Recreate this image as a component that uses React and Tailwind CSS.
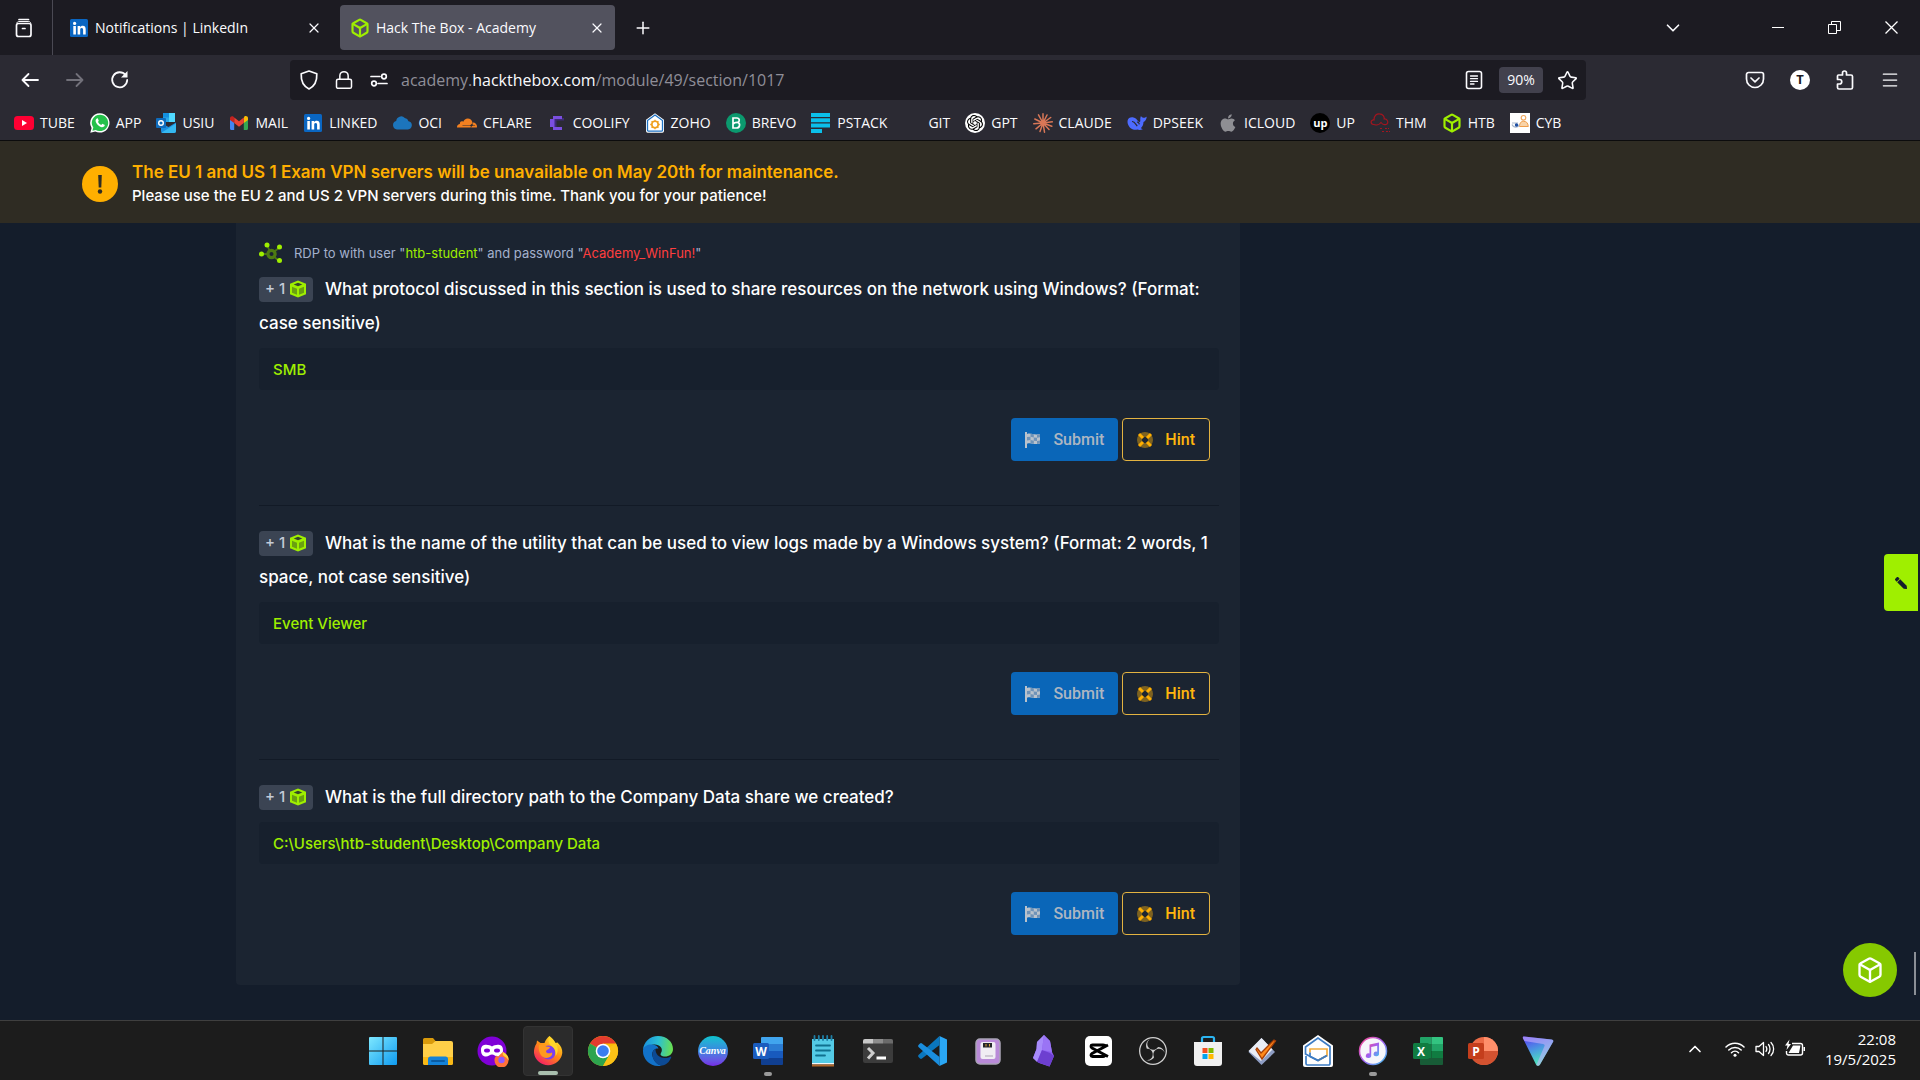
import { Fragment } from 'react';
import { Box, ChevronDown, ChevronUp, Lock, Plus, Star, X, Menu } from 'lucide-react';
import { FaApple, FaPen } from 'react-icons/fa';
import { SiCloudflare, SiObsstudio, SiOpenai } from 'react-icons/si';

/* ======= BOOKMARK ICONS ======= */
const LinkedInIcon = () => (
    <svg viewBox="0 0 20 20" className="w-5 h-5 shrink-0">
        <rect x="1" y="1" width="18" height="18" rx="1.5" fill="#0a66c2" />
        <circle cx="5.6" cy="5.4" r="1.6" fill="#fff" />
        <path d="M4.3 8h2.6v8.4H4.3zM8.6 8h2.5v1.2c.5-.8 1.4-1.4 2.6-1.4 2.4 0 3 1.5 3 3.7v4.9h-2.6v-4.4c0-1.1-.1-2.1-1.4-2.1s-1.5.9-1.5 2v4.5H8.6z" fill="#fff" />
    </svg>
);

const TubeIcon = () => (
    <svg viewBox="0 0 20 20" className="w-5 h-5">
        <rect x="0" y="3" width="20" height="14" rx="3.5" fill="#ff0033" />
        <path d="M8 7v6l5-3z" fill="#fff" />
    </svg>
);

const WhatsAppIcon = () => (
    <svg viewBox="0 0 20 20" className="w-5 h-5">
        <path d="M10 .2a9.7 9.7 0 1 1-4.7 18.3L.3 19.8l1.3-4.9A9.7 9.7 0 0 1 10 .2z" fill="#fff" />
        <path d="M10 1.7a8.2 8.2 0 1 1-4.3 15.2l-3.3.9.9-3.2A8.2 8.2 0 0 1 10 1.7z" fill="#25c14b" />
        <path d="M6.9 5.4c.4-.2.8-.1 1 .3l.8 1.8c.1.3 0 .5-.7 1.4.9 1.6 1.9 2.4 3.4 3 .8-1 .9-1.1 1.2-1l1.9.9c.3.2.2.9 0 1.3-.4.8-1.7 1.2-2.6 1.1-2.7-.4-6-3.4-6.3-6.2 0-1.1.5-2.1 1.3-2.6z" fill="#fff" />
    </svg>
);

const OutlookIcon = () => (
    <svg viewBox="0 0 20 20" className="w-5 h-5">
        <path d="M7 0h12v9H7z" fill="#1490df" />
        <path d="M13 0h6v4.5h-6zM13 9h6V4.5h-6z" fill="#50d9ff" />
        <path d="M7 4.5h6V9H7z" fill="#28a8ea" />
        <path d="M5 10l7.5 4L20 9.5V18a2 2 0 0 1-2 2H7a2 2 0 0 1-2-2z" fill="#1a8fe0" />
        <path d="M5 20l15-9.5V18a2 2 0 0 1-2 2z" fill="#35b8f1" />
        <rect x="0" y="5" width="10" height="10" rx="1" fill="#0f6cbd" />
        <circle cx="5" cy="10" r="2.3" fill="none" stroke="#fff" strokeWidth="1.4" />
    </svg>
);

const GmailIcon = () => (
    <svg viewBox="0 0 20 20" className="w-5 h-5">
        <path d="M1 5v10.5c0 .8.6 1.5 1.4 1.5H5.2V8z" fill="#4285f4" />
        <path d="M19 5v10.5c0 .8-.6 1.5-1.4 1.5h-2.8V8z" fill="#34a853" />
        <path d="M14.8 5v5L19 7V5.2c0-2-2.2-2.8-3.6-1.8z" fill="#fbbc04" />
        <path d="M5.2 10V4.6L10 8.3l4.8-3.7V10L10 13.7z" fill="#ea4335" />
        <path d="M1 5.2V7l4.2 3V4.6l-.7-.9C3 2.6 1 3.5 1 5.2z" fill="#c5221f" />
    </svg>
);

const CloudIcon = () => (
    <svg viewBox="0 0 20 20" className="w-5 h-5">
        <path d="M5 16.5a4.4 4.4 0 0 1-.8-8.6 5 5 0 0 1 8.6-3 4.4 4.4 0 0 1 3.7 3.3 4.2 4.2 0 0 1-.6 8.3z" fill="#1c75bc" />
    </svg>
);

const CoolifyIcon = () => (
    <svg viewBox="0 0 20 20" className="w-5 h-5">
        <path d="M7 5h10v2.5H9.5v8H7z" fill="#3f2a78" />
        <path d="M6 3h9v3H7.500v8H15v3H6v-3H3V6h3z" fill="#7b4fe0" />
    </svg>
);

const ZohoIcon = () => (
    <svg viewBox="0 0 20 20" className="w-5 h-5">
        <path d="M10 .3l9 6.5V18a1.7 1.7 0 0 1-1.7 1.700H2.700A1.700 1.700 0 0 1 1 18V6.800z" fill="#fff" />
        <path d="M10 2l7.500 5.500v9.500a1.200 1.200 0 0 1-1.200 1.200H3.700A1.200 1.200 0 0 1 2.500 17V7.500z" fill="#fff" stroke="#1f72c4" strokeWidth="1.300" />
        <circle cx="10" cy="11.500" r="3.200" fill="none" stroke="#f0a01e" strokeWidth="1.600" />
        <path d="M10 6.700v2M10 14.300v2M5.200 11.500h2M12.800 11.500h2M6.600 8.100L8 9.500M12 13.500l1.400 1.400M13.400 8.100L12 9.500M8 13.500l-1.400 1.400" stroke="#f0a01e" strokeWidth="1.300" />
    </svg>
);

const BrevoIcon = () => (
    <svg viewBox="0 0 20 20" className="w-5 h-5">
        <circle cx="10" cy="10" r="10" fill="#0b996e" />
        <path d="M7 15V5h3.800c3 0 3.300 3.600.8 4.500C14.700 10.200 14 15 10.500 15zM7.500 11.200c0-1 2-1.800 3.900-1.800" fill="none" stroke="#fff" strokeWidth="1.700" />
    </svg>
);

const PaystackIcon = () => (
    <svg viewBox="0 0 20 20" className="w-5 h-5">
        <path d="M0 0h19v4H0zM0 5.300h19v4H0zM0 10.600h19v4H0zM0 15.900h11v4H0z" fill="#0bc0ea" />
    </svg>
);

const OpenAiIcon = () => (
    <span className="flex items-center justify-center w-5 h-5 rounded-full bg-white">
        <SiOpenai className="w-4 h-4 text-black" />
    </span>
);

const ClaudeIcon = () => (
    <svg viewBox="0 0 20 20" className="w-5 h-5">
        <path d="M10 10V.8M10 10l4-8M10 10l7.700-5.500M10 10l9.300-1.200M10 10l8.800 3.200M10 10l6 6.500M10 10l1.500 9.200M10 10l-3 8.500M10 10l-7 5.800M10 10l-9.300.8M10 10L1.800 6M10 10L5.500 1.800" stroke="#d97757" strokeWidth="1.500" strokeLinecap="round" />
    </svg>
);

const DeepSeekIcon = () => (
    <svg viewBox="0 0 20 20" className="w-5 h-5">
        <path d="M.5 8C1 4.600 4 3.800 6.500 4.400c2 .4 3.500 2 4.500 3.600 1 1.500 2.300 1.200 2.300-.6-.2-1.800.2-3.400.7-4.400.6 1.400 1.600 1.800 2.700 1.700 1.200 0 2-.5 3-1-.2 2.600-1.300 4.500-3.200 5.200-.1 2.800-1.200 4.900-2.700 6.300.8.5 1.500.7 2 1-2 1-4 .8-5.500.4C5.500 17.700.2 14 .5 8z" fill="#4d6bfe" />
        <path d="M5 8.500c2.500-.3 3.700 2.800 5.300 4.700M10 9.300c1.300-.4 2 .5 2.300 2" fill="none" stroke="#2b2a33" strokeWidth="1.200" />
    </svg>
);

const UpworkIcon = () => (
    <span className="flex items-center justify-center w-5 h-5 rounded-full bg-black text-white text-[11px] leading-4 font-bold">up</span>
);

const ThmIcon = () => (
    <svg viewBox="0 0 20 20" className="w-5 h-5" fill="none" stroke="#a3151f" strokeWidth="1.200">
        <path d="M3.500 11.500C0 11 .5 6.500 4 7 4 2 7 .6 9.500.8 13 1 14.500 3.500 14.200 6c3.500-.5 5 4.500 1.800 5.500-2 .6-4-.5-5-2-1.500 2.300-5 2.800-7.500 2z" />
        <path d="M10 15.500h3M15 15.500h4M12 18.500h2M16 18.500h4" strokeDasharray="2 1" />
    </svg>
);

const CybIcon = () => (
    <svg viewBox="0 0 20 20" className="w-5 h-5">
        <rect width="20" height="20" fill="#fff" />
        <circle cx="13.500" cy="4.800" r="2.300" fill="none" stroke="#f0a860" strokeWidth="1.200" />
        <path d="M9.500 13.500c0-4 2-5.200 4-5.200 2.800 0 4.500 1.500 4.800 5.200z" fill="#f9d3a8" stroke="#ef9d4b" strokeWidth="1" />
        <path d="M2 10h6M2 11.500c1.500 3.500 6 3.500 7.500 0" fill="none" stroke="#a8b6cc" strokeWidth="1.200" />
        <circle cx="6.500" cy="12" r="1.700" fill="#1f4fa3" />
    </svg>
);

const HtbIcon = () => <Box className="w-5 h-5 text-[#9fef00] shrink-0" strokeWidth={2.6} />;

const bookmarks = [
    { label: 'TUBE', icon: <TubeIcon /> },
    { label: 'APP', icon: <WhatsAppIcon /> },
    { label: 'USIU', icon: <OutlookIcon /> },
    { label: 'MAIL', icon: <GmailIcon /> },
    { label: 'LINKED', icon: <LinkedInIcon /> },
    { label: 'OCI', icon: <CloudIcon /> },
    { label: 'CFLARE', icon: <SiCloudflare className="w-5 h-5 text-[#f38020]" /> },
    { label: 'COOLIFY', icon: <CoolifyIcon /> },
    { label: 'ZOHO', icon: <ZohoIcon /> },
    { label: 'BREVO', icon: <BrevoIcon /> },
    { label: 'PSTACK', icon: <PaystackIcon /> },
    { label: 'GIT', icon: <span className="w-5 h-5" /> },
    { label: 'GPT', icon: <OpenAiIcon /> },
    { label: 'CLAUDE', icon: <ClaudeIcon /> },
    { label: 'DPSEEK', icon: <DeepSeekIcon /> },
    { label: 'ICLOUD', icon: <FaApple className="w-5 h-5 text-[#8e8e93]" /> },
    { label: 'UP', icon: <UpworkIcon /> },
    { label: 'THM', icon: <ThmIcon /> },
    { label: 'HTB', icon: <HtbIcon /> },
    { label: 'CYB', icon: <CybIcon /> },
];

/* ======= TASKBAR ICONS ======= */
const taskbarApps = [
    {
        name: 'Start',
        icon: (
            <svg viewBox="0 0 32 32" className="w-8 h-8">
                <defs>
                    <linearGradient id="start" x1="0" y1="0" x2="1" y2="1">
                        <stop offset="0" stopColor="#7ee8ff" />
                        <stop offset="1" stopColor="#0f9bf0" />
                    </linearGradient>
                </defs>
                <path d="M2 3a1 1 0 0 1 1-1h12.500v13.500H2zM16.500 2H29a1 1 0 0 1 1 1v12.500H16.500zM2 16.500h13.500V30H3a1 1 0 0 1-1-1zM16.500 16.500H30V29a1 1 0 0 1-1 1H16.500z" fill="url(#start)" />
            </svg>
        ),
    },
    {
        name: 'File Explorer',
        icon: (
            <svg viewBox="0 0 32 32" className="w-8 h-8">
                <path d="M1 4.500A1.500 1.500 0 0 1 2.500 3H11l3 3.500V10H1z" fill="#d99a0b" />
                <path d="M1 9h9l3.500-3H29a2 2 0 0 1 2 2v20a2 2 0 0 1-2 2H3a2 2 0 0 1-2-2z" fill="#ffcf48" />
                <path d="M1 22h30v6a2 2 0 0 1-2 2H3a2 2 0 0 1-2-2z" fill="#f9b916" />
                <path d="M6 30v-6a2.500 2.500 0 0 1 2.500-2.500h15A2.500 2.500 0 0 1 26 24v6z" fill="#1482d8" />
                <path d="M10 26h12" stroke="#0a5ca3" strokeWidth="2" strokeLinecap="round" />
            </svg>
        ),
    },
    {
        name: 'Firefox Private',
        icon: (
            <svg viewBox="0 0 32 32" className="w-8 h-8">
                <circle cx="15" cy="16" r="14.500" fill="#8000d7" />
                <path d="M4 15c0-7 8-5.500 11-3.500C18 9.500 26 8 26 15c0 5-2.500 6.500-5 6.500s-4-2-6-2-3.500 2-6 2S4 20 4 15z" fill="#fff" />
                <ellipse cx="10" cy="15.500" rx="3" ry="2" fill="#8000d7" />
                <ellipse cx="20" cy="15.500" rx="3" ry="2" fill="#8000d7" />
                <path d="M26 17c4 2 6 5 5.500 8.500a7 7 0 0 1-14 0c0-2 .5-3.500 2-5l1.500 1.500c1-2 3-3 5-5z" fill="#ff7139" />
                <circle cx="24.500" cy="25" r="3.200" fill="#9059ff" />
                <path d="M26 17c4 2 6 5 5.500 8.500-1-2-2-3-4-4s-2-3-1.500-4.500z" fill="#ffd43a" />
            </svg>
        ),
    },
    {
        name: 'Firefox',
        active: true,
        icon: (
            <svg viewBox="0 0 32 32" className="w-8 h-8">
                <defs>
                    <linearGradient id="fox" x1=".8" y1=".1" x2=".2" y2="1">
                        <stop offset="0" stopColor="#ffe226" />
                        <stop offset=".45" stopColor="#ff8a16" />
                        <stop offset="1" stopColor="#f5156c" />
                    </linearGradient>
                </defs>
                <path d="M17.500 1c1 3.500 4 4.500 6 7l2-.5c3.500 3 5 7 4.800 10.500A14.300 14.300 0 0 1 2 18c-.3-3.500.8-7 2.500-9.500L5 5.500 8.500 8h4c1-3 3-5.500 5-7z" fill="url(#fox)" />
                <circle cx="16.500" cy="17.500" r="7" fill="#7a3ff0" />
                <path d="M7 10c3-1 5.500-.5 7 1.500l4 .5c-.5 2.500-3.500 2.500-4 4.500.5 2 3.500 2.500 6 1 1.500 4-5 7-9 4.500C7.500 19.500 6 14 7 10z" fill="#ff9a1f" />
                <path d="M17.500 1c3 2 5 5 6 7 3 4.500 3 9 0 13 .5-5-1-8-4-10-3.500-2.500-3.500-7-2-10z" fill="#ffd52b" />
            </svg>
        ),
    },
    {
        name: 'Chrome',
        icon: (
            <svg viewBox="0 0 32 32" className="w-8 h-8">
                <circle cx="16" cy="16" r="15" fill="#fbbc04" />
                <path d="M16 16L3 8.500A15 15 0 0 1 29 8.500H16z" fill="#e33b2e" />
                <path d="M16 16L3 8.500A15 15 0 0 0 16 31l6.500-11.200z" fill="#2da44e" />
                <path d="M16 16L29 8.500A15 15 0 0 1 16 31l6.500-11.200z" fill="#fbc116" />
                <circle cx="16" cy="16" r="7.300" fill="#fff" />
                <circle cx="16" cy="16" r="5.800" fill="#3b7df0" />
            </svg>
        ),
    },
    {
        name: 'Edge',
        icon: (
            <svg viewBox="0 0 32 32" className="w-8 h-8">
                <defs>
                    <linearGradient id="edge" x1="0" y1=".3" x2="1" y2=".4">
                        <stop offset="0" stopColor="#1a8fdd" />
                        <stop offset=".5" stopColor="#2bbfd4" />
                        <stop offset="1" stopColor="#69e04f" />
                    </linearGradient>
                </defs>
                <path d="M1 15C1.500 7 8 1 16 1c9 0 15 6 15 13 0 5-4 7.500-8 7.500-3 0-5.500-1.500-4-3.500 3-5-2-9-7-8.500S2 12 1 15z" fill="url(#edge)" />
                <path d="M1 15c1-4 5-6 9.500-5.500 3 .3 5.500 2 6 4C12 13 9.500 17 10.500 21c1.200 5.500 6 9.500 9.500 9.500-2 .5-3 .5-4 .5A15 15 0 0 1 1 15z" fill="#1272c9" />
                <path d="M10.500 21c-.5-3.500.5-6 3-7.500-.5 5 3.500 9.500 9 9.500 2.500 0 4.500-.5 6-1.300.6-.3 1 .2.7.8C27.500 27 24 30 20 30.500c-4 .3-8.500-4-9.500-9.500z" fill="#0c4a94" />
            </svg>
        ),
    },
    {
        name: 'Canva',
        icon: (
            <span className="flex items-center justify-center w-8 h-8">
                <span className="flex items-center justify-center w-[30px] h-[30px] rounded-full bg-linear-to-b from-[#08c3cd] via-[#3a83e0] to-[#7429e6] text-white text-[10px] leading-3 italic font-bold font-['Liberation_Serif',serif]">
                    Canva
                </span>
            </span>
        ),
    },
    {
        name: 'Word',
        running: true,
        icon: (
            <svg viewBox="0 0 32 32" className="w-8 h-8">
                <path d="M9 3a1 1 0 0 1 1-1h20a1 1 0 0 1 1 1v6H9z" fill="#41a5ee" />
                <path d="M9 9h22v7H9z" fill="#2b7cd3" />
                <path d="M9 16h22v7H9z" fill="#185abd" />
                <path d="M9 23h22v6a1 1 0 0 1-1 1H10a1 1 0 0 1-1-1z" fill="#103f91" />
                <rect x="1" y="8" width="16" height="16" rx="1.500" fill="#1b5cbe" />
                <text x="9" y="20.500" textAnchor="middle" fill="#fff" fontSize="12" fontWeight="700" fontFamily="Open Sans, sans-serif">W</text>
            </svg>
        ),
    },
    {
        name: 'Notepad',
        icon: (
            <svg viewBox="0 0 32 32" className="w-8 h-8">
                <path d="M5 4h22v25H5z" fill="#54cbe6" />
                <path d="M5 28h22v1.500H5z" fill="#f4f6f8" />
                <path d="M5 29.500h22v2H5z" fill="#b0672a" />
                <path d="M7.500 1v4M11.800 1v4M16 1v4M20.200 1v4M24.500 1v4" stroke="#1e7fa6" strokeWidth="1.800" strokeLinecap="round" />
                <path d="M9 10.500h14M9 15.500h14M9 20.500h9" stroke="#10718f" strokeWidth="1.800" strokeLinecap="round" />
            </svg>
        ),
    },
    {
        name: 'Terminal',
        icon: (
            <svg viewBox="0 0 32 32" className="w-8 h-8">
                <rect x="1" y="4" width="30" height="24" rx="2" fill="#3c3c3c" />
                <path d="M1 6a2 2 0 0 1 2-2h8v4.500H1z" fill="#c9c9c9" />
                <path d="M11 4h10v4.500H11z" fill="#8d8d8d" />
                <path d="M21 4h8a2 2 0 0 1 2 2v2.500H21z" fill="#6b6b6b" />
                <path d="M6 13l5 5-5 5.500" fill="none" stroke="#cfcfcf" strokeWidth="3" />
                <path d="M14.500 23h9.500" stroke="#fff" strokeWidth="3" />
            </svg>
        ),
    },
    {
        name: 'VS Code',
        icon: (
            <svg viewBox="0 0 32 32" className="w-8 h-8">
                <path d="M22.500 1L30 4.500v23L22.500 31z" fill="#2aa7f5" />
                <path d="M22.500 1v9L5 23.500a1.500 1.500 0 0 1-2 0l-1.500-1.400a1.500 1.500 0 0 1 0-2z" fill="#0a76bd" />
                <path d="M22.500 31v-9L5 8.500a1.500 1.500 0 0 0-2 0L1.500 9.900a1.500 1.500 0 0 0 0 2z" fill="#1a8ede" />
            </svg>
        ),
    },
    {
        name: 'Disk Utility',
        icon: (
            <svg viewBox="0 0 32 32" className="w-8 h-8">
                <rect x="4" y="4" width="24" height="25" rx="4" fill="#b98ad8" stroke="#a9a4b5" strokeWidth="1.500" />
                <rect x="8.500" y="7" width="15" height="17" rx="2" fill="#f0edf3" />
                <path d="M11 8h9v4.500h-9z" fill="#24262b" />
                <path d="M14 9v2.500M17.500 9v2.500" stroke="#d8a23b" />
                <path d="M13 21h8" stroke="#c3bdca" strokeWidth="1.500" />
            </svg>
        ),
    },
    {
        name: 'Obsidian',
        icon: (
            <svg viewBox="0 0 32 32" className="w-8 h-8">
                <path d="M17 0l6 6 2 11 2 4-4.500 10.500L12 28l-6-5 3.500-9L10 7z" fill="#8b5cf0" />
                <path d="M17 0l-2 15-5 12-4-4 3.500-9L10 7z" fill="#a78bfa" />
                <path d="M15 15l8 3 4 3-4.500 10.500L10 27z" fill="#6d3fd0" />
                <path d="M17 0l6 6 2 11-10-2z" fill="#9a74f5" />
            </svg>
        ),
    },
    {
        name: 'CapCut',
        icon: (
            <svg viewBox="0 0 32 32" className="w-8 h-8">
                <rect x="3" y="1" width="27" height="30" rx="5" fill="#fff" />
                <path d="M26 10L10 18.500c-1.500 1-1.500 3 .5 3H21c1.500 0 2-.6 2-2M26 21.500L10 13c-1.500-1-1.500-3 .5-3H21c1.500 0 2 .6 2 2" fill="none" stroke="#000" strokeWidth="2.800" />
            </svg>
        ),
    },
    { name: 'OBS Studio', icon: <SiObsstudio className="w-7 h-7 text-[#d0d0d0]" /> },
    {
        name: 'Microsoft Store',
        icon: (
            <svg viewBox="0 0 32 32" className="w-8 h-8">
                <path d="M10 8V3.500A1.500 1.500 0 0 1 11.500 2h9A1.500 1.500 0 0 1 22 3.500V8" fill="none" stroke="#2bb4f0" strokeWidth="2.200" />
                <path d="M2 7h28v21a3 3 0 0 1-3 3H5a3 3 0 0 1-3-3z" fill="#f0f0f0" />
                <path d="M10.500 13h5v5h-5z" fill="#f25022" />
                <path d="M16.500 13h5v5h-5z" fill="#7fba00" />
                <path d="M10.500 19h5v5h-5z" fill="#00a4ef" />
                <path d="M16.500 19h5v5h-5z" fill="#ffb900" />
            </svg>
        ),
    },
    {
        name: 'Tasks',
        icon: (
            <svg viewBox="0 0 32 32" className="w-8 h-8">
                <path d="M14.500 3L28 17 14.500 30 1.500 17z" fill="#8f9ec4" />
                <path d="M14.500 3l11 11.500L14 26 1.500 16z" fill="#e9edf6" />
                <path d="M10 13l4 5L27 5l1.500 1L15 24l-6-9.500z" fill="#ff8a1c" stroke="#a83f06" strokeWidth="1.300" />
            </svg>
        ),
    },
    {
        name: 'Zoho Mail',
        icon: (
            <svg viewBox="0 0 32 32" className="w-8 h-8">
                <path d="M16 0l15 10.500V30a2 2 0 0 1-2 2H3a2 2 0 0 1-2-2V10.500z" fill="#fff" />
                <path d="M4 21v7.500A1.500 1.500 0 0 0 5.500 30h21a1.500 1.500 0 0 0 1.500-1.500V11.500L16 3 3.500 12v7L16 25.500l9-5" fill="none" stroke="#3d7cc4" strokeWidth="1.700" />
                <path d="M8 17.500V14h17v6.500l-9 5" fill="none" stroke="#f2ac3c" strokeWidth="1.700" />
                <path d="M8 17.500v4l8 4 9-5" fill="none" stroke="#3d7cc4" strokeWidth="1.700" />
            </svg>
        ),
    },
    {
        name: 'iTunes',
        running: true,
        icon: (
            <svg viewBox="0 0 32 32" className="w-8 h-8">
                <defs>
                    <linearGradient id="tunes" x1="0" y1="0" x2="1" y2="1">
                        <stop offset="0" stopColor="#fb4a8b" />
                        <stop offset=".5" stopColor="#a35df0" />
                        <stop offset="1" stopColor="#3cc8f0" />
                    </linearGradient>
                </defs>
                <circle cx="16" cy="16" r="13.500" fill="#f6f6fb" stroke="url(#tunes)" strokeWidth="1.500" />
                <path d="M12.500 9.500L22 7.500v11.300a2.700 2.300 0 1 1-1.800-2v-6l-6 1.300v8.500a2.700 2.300 0 1 1-1.700-2z" fill="url(#tunes)" />
            </svg>
        ),
    },
    {
        name: 'Excel',
        icon: (
            <svg viewBox="0 0 32 32" className="w-8 h-8">
                <path d="M8 3a1 1 0 0 1 1-1h10.500v7H8z" fill="#21a366" />
                <path d="M19.500 2H30a1 1 0 0 1 1 1v6H19.500z" fill="#33c481" />
                <path d="M8 9h11.500v14H8z" fill="#107c41" />
                <path d="M19.500 9H31v7H19.500z" fill="#21a366" />
                <path d="M19.500 16H31v7H19.500z" fill="#107c41" />
                <path d="M8 23h23v6a1 1 0 0 1-1 1H9a1 1 0 0 1-1-1z" fill="#185c37" />
                <rect x="1" y="8" width="16" height="16" rx="1.500" fill="#107c41" />
                <text x="9" y="20.500" textAnchor="middle" fill="#fff" fontSize="12" fontWeight="700" fontFamily="Open Sans, sans-serif">X</text>
            </svg>
        ),
    },
    {
        name: 'PowerPoint',
        icon: (
            <svg viewBox="0 0 32 32" className="w-8 h-8">
                <circle cx="17" cy="16" r="14" fill="#ed6c47" />
                <path d="M17 2a14 14 0 0 1 14 14H17z" fill="#ff8f6b" />
                <path d="M3 16h28a14 14 0 0 1-28 0z" fill="#d35230" />
                <rect x="1" y="8" width="16" height="16" rx="1.500" fill="#c43e1c" />
                <text x="9" y="20.500" textAnchor="middle" fill="#fff" fontSize="12" fontWeight="700" fontFamily="Open Sans, sans-serif">P</text>
            </svg>
        ),
    },
    {
        name: 'Proton VPN',
        icon: (
            <svg viewBox="0 0 32 32" className="w-8 h-8">
                <defs>
                    <linearGradient id="vpn" x1=".1" y1="0" x2=".5" y2="1">
                        <stop offset="0" stopColor="#5b3df5" />
                        <stop offset=".5" stopColor="#4b9be0" />
                        <stop offset="1" stopColor="#4ff0b5" />
                    </linearGradient>
                </defs>
                <path d="M2 1.500C1 1.300.5 2 1 3.500l13 26c1 1.800 3 1.800 4 0L31 7c.8-1.500 0-2.300-1.500-2.500z" fill="url(#vpn)" />
                <path d="M2 1.500C1 1.300.5 2 1 3.500L2.500 6 21 9c1.500.3 2 1.300 1.300 2.500L14.300 30c1 1.300 2.900 1.100 3.700-.5L31 7c.8-1.500 0-2.300-1.500-2.500z" fill="#c6b0fa" fillOpacity=".6" />
            </svg>
        ),
    },
];

/* ======= PAGE ICONS ======= */
const CubeIcon = () => (
    <svg viewBox="0 0 18 18" className="w-[18px] h-[18px]">
        <path d="M9 .5l8 3.200v10.600l-8 3.200-8-3.200V3.700z" fill="#9fef00" />
        <path d="M9 2.800l4.300 1.700L9 6.200 4.700 4.500z" fill="#35452a" />
        <path d="M3 6.800l5 2v5.900l-5-2zM15 6.800l-5 2v5.900l5-2z" fill="#6aa011" />
    </svg>
);

const NetworkIcon = () => (
    <svg viewBox="0 0 24 24" className="w-6 h-6 shrink-0">
        <path d="M12 12L8 3M12 12l8-6M12 12l8 7M12 12H2" stroke="#4d7516" strokeWidth="1.800" />
        <circle cx="12.500" cy="12" r="3.600" fill="#1a2332" stroke="#4d7a12" strokeWidth="3.200" />
        <circle cx="8" cy="3" r="2.500" fill="#9fef00" />
        <circle cx="20.500" cy="5" r="2.500" fill="#9fef00" />
        <circle cx="20.500" cy="18.500" r="2.500" fill="#9fef00" />
        <circle cx="2.500" cy="12" r="2.500" fill="#9fef00" />
    </svg>
);

const FlagIcon = () => (
    <svg viewBox="0 0 16 16" className="w-4 h-4">
        <path d="M0 0h2v16H0z" fill="#b9c2cc" />
        <path d="M2 2c4-1.600 6 1.400 13 0v9.500c-6 1.800-9-1.500-13 .3z" fill="#b9c2cc" />
        <path d="M5.500 1.500l3.300.8v3.200l-3.300-.8zM12 2.600l3-.5v3.200l-3 .5zM2 5l3.500-.3V8L2 8.500zM8.800 5.500l3.200.3V9l-3.200-.3zM5.500 8l3.300.7v3L5.500 11zM12 9l3-.5v3l-3 .4z" fill="#6f93b8" />
    </svg>
);

const LifeRingIcon = () => (
    <svg viewBox="0 0 16 16" className="w-4 h-4">
        <circle cx="8" cy="8" r="5.500" fill="none" stroke="#7d6220" strokeWidth="5" />
        <path d="M2 2l4 4M14 2l-4 4M2 14l4-4M14 14l-4-4" stroke="#ffaf00" strokeWidth="3" />
    </svg>
);

const questions = [
    {
        id: 'q1',
        text: 'What protocol discussed in this section is used to share resources on the network using Windows? (Format: case sensitive)',
        answer: 'SMB',
    },
    {
        id: 'q2',
        text: 'What is the name of the utility that can be used to view logs made by a Windows system? (Format: 2 words, 1 space, not case sensitive)',
        answer: 'Event Viewer',
    },
    {
        id: 'q3',
        text: 'What is the full directory path to the Company Data share we created?',
        answer: 'C:\\Users\\htb-student\\Desktop\\Company Data',
    },
];

const TabBar = () => (
    <div className="flex items-stretch h-[55px] bg-[#1c1b22]">
        <button aria-label="Firefox View" className="flex items-center justify-center w-[53px] pr-1 border-r border-[#4a4953]">
            <svg viewBox="0 0 20 20" className="w-5 h-5" fill="none" stroke="#fbfbfe" strokeWidth="1.700" strokeLinecap="round">
                <rect x="2.500" y="5.500" width="14.500" height="13" rx="2" />
                <path d="M5 1.500h9.500M8.500 10.500h2.500" />
                <path d="M2.800 5c.5-1 1-1.500 2-1.500h10c1 0 1.500.5 2 1.500" strokeWidth="1" />
            </svg>
        </button>
        <div className="flex items-center w-[279px] my-[5px] ml-2 pl-2 pr-[18px]">
            <LinkedInIcon />
            <span className="flex-1 ml-[6px] text-sm">Notifications | LinkedIn</span>
            <button aria-label="Close tab"><X className="w-4 h-4" strokeWidth={1.8} /></button>
        </div>
        <div className="flex items-center w-[275px] my-[5px] px-[10px] rounded-sm bg-[#52525e]">
            <HtbIcon />
            <span className="flex-1 ml-[6px] text-sm">Hack The Box - Academy</span>
            <button aria-label="Close tab"><X className="w-4 h-4" strokeWidth={1.8} /></button>
        </div>
        <button aria-label="New tab" className="ml-[18px]"><Plus className="w-5 h-5" strokeWidth={1.8} /></button>
        <div className="flex items-center ml-auto">
            <button aria-label="List all tabs" className="mr-[65px]"><ChevronDown className="w-[22px] h-[22px]" strokeWidth={1.8} /></button>
            <button aria-label="Minimize" className="flex items-center justify-center w-[57px] h-full">
                <svg viewBox="0 0 12 12" className="w-3 h-3"><path d="M0 5.500h12" stroke="#fff" /></svg>
            </button>
            <button aria-label="Restore" className="flex items-center justify-center w-[57px] h-full">
                <svg viewBox="0 0 13 13" className="w-[13px] h-[13px]" fill="none" stroke="#fff"><path d="M.5 3.500h8v9h-8zM3.500 3V.5h9v9H9" /></svg>
            </button>
            <button aria-label="Close window" className="flex items-center justify-center w-[57px] h-full">
                <svg viewBox="0 0 13 13" className="w-[13px] h-[13px]"><path d="M.5.5l12 12M12.500.5l-12 12" stroke="#fff" strokeWidth="1.300" /></svg>
            </button>
        </div>
    </div>
);

const NavBar = () => (
    <div className="flex items-center h-[50px]">
        <div className="flex items-center gap-[25px] pl-5 w-[290px] shrink-0">
            <button aria-label="Back">
                <svg viewBox="0 0 20 20" className="w-5 h-5" fill="none" stroke="#fbfbfe" strokeWidth="1.800" strokeLinecap="round" strokeLinejoin="round"><path d="M18 10H2.500M8.500 4l-6 6 6 6" /></svg>
            </button>
            <button aria-label="Forward" disabled>
                <svg viewBox="0 0 20 20" className="w-5 h-5" fill="none" stroke="#72717a" strokeWidth="1.800" strokeLinecap="round" strokeLinejoin="round"><path d="M2 10h15.500M11.500 4l6 6-6 6" /></svg>
            </button>
            <button aria-label="Reload">
                <svg viewBox="0 0 20 20" className="w-5 h-5" fill="none" stroke="#fbfbfe" strokeWidth="1.800" strokeLinecap="round"><path d="M15.500 5A7.500 7.500 0 1 0 17.200 10" /><path d="M17.500 1v6.500H11z" fill="#fbfbfe" stroke="none" /></svg>
            </button>
        </div>
        <div className="flex items-center flex-1 h-10 pl-[9px] pr-2 rounded-sm bg-[#1c1b22]">
            <svg viewBox="0 0 20 20" className="w-5 h-5 shrink-0" fill="none" stroke="#fbfbfe" strokeWidth="1.700" strokeLinejoin="round">
                <path d="M10 1l7.800 2.800c.3 6.500-2.300 12.500-7.800 15.200C4.500 16.300 1.900 10.300 2.200 3.800z" />
            </svg>
            <Lock className="w-5 h-5 ml-[15px] shrink-0" strokeWidth={1.8} />
            <svg viewBox="0 0 20 20" className="w-5 h-5 ml-[15px] shrink-0" fill="none" stroke="#fbfbfe" strokeWidth="1.700">
                <circle cx="15" cy="6.500" r="2.300" />
                <circle cx="5" cy="13.500" r="2.300" />
                <path d="M2 6.500h9M9 13.500h9" strokeLinecap="round" />
            </svg>
            <div role="textbox" aria-label="Address" tabIndex={0} className="ml-3 text-base text-[#8f8e98]">
                academy.<span className="text-[#fbfbfe]">hackthebox.com</span>/module/49/section/1017
            </div>
            <button aria-label="Reader view" className="ml-auto">
                <svg viewBox="0 0 20 20" className="w-5 h-5" fill="none" stroke="#fbfbfe" strokeWidth="1.600" strokeLinecap="round"><rect x="2.500" y="1.500" width="15" height="17" rx="2" /><path d="M6.500 6h7M6.500 8.700h7M6.500 11.400h7M6.500 14h3.500" strokeWidth="1.300" /></svg>
            </button>
            <button className="flex items-center justify-center w-11 h-[26px] ml-[15px] rounded-sm bg-[#42414d] text-sm">90%</button>
            <button aria-label="Bookmark this page" className="ml-[14px]"><Star className="w-[21px] h-[21px]" strokeWidth={1.8} /></button>
        </div>
        <div className="flex items-center justify-end gap-[25px] w-[334px] pr-5">
            <button aria-label="Pocket">
                <svg viewBox="0 0 20 20" className="w-5 h-5" fill="none" stroke="#fbfbfe" strokeWidth="1.700" strokeLinecap="round" strokeLinejoin="round"><path d="M3.500 2.500h13a2 2 0 0 1 2 2V9a8.500 8.500 0 0 1-17 0V4.500a2 2 0 0 1 2-2zM6 8l4 3.800L14 8" /></svg>
            </button>
            <button aria-label="Account" className="flex items-center justify-center w-5 h-5 rounded-full bg-white text-[#1c1b22] text-[13px] font-bold">T</button>
            <button aria-label="Extensions">
                <svg viewBox="0 0 20 20" className="w-5 h-5" fill="none" stroke="#fbfbfe" strokeWidth="1.700" strokeLinejoin="round"><path d="M2.500 8.500V6a1 1 0 0 1 1-1H7.500V3a2 2 0 0 1 4 0v2H16a1.500 1.500 0 0 1 1.500 1.500v11A1.500 1.500 0 0 1 16 19H4a1.500 1.500 0 0 1-1.500-1.500V14h2a2.200 2.200 0 0 0 0-4.500h-2z" /></svg>
            </button>
            <button aria-label="Open menu"><Menu className="w-5 h-5" strokeWidth={1.5} /></button>
        </div>
    </div>
);

const QuestionBlock = ({ question }) => (
    <div>
        <label htmlFor={question.id} className="block text-[17px] leading-[34px] font-medium text-white">
            <span className="inline-flex items-center justify-center gap-1 w-[54px] h-[25px] mr-3 mb-[2px] rounded-sm bg-[#3b4453] text-[15px] leading-5 text-[#c4cbd8] align-middle">
                + 1 <CubeIcon />
            </span>
            {question.text}
        </label>
        <input
            id={question.id}
            type="text"
            defaultValue={question.answer}
            className="block w-full h-[42px] mt-2 px-[14px] rounded-sm bg-[#17202d] text-[15px] font-medium text-[#9fef00] outline-none"
        />
        <div className="flex justify-end gap-1 mt-7 pr-[9px] font-['Roboto',sans-serif] text-base font-medium">
            <button className="flex items-center gap-3 h-[43px] px-[14px] rounded-sm bg-[#0a66b8] text-[#adb6c2]">
                <FlagIcon />
                Submit
            </button>
            <button className="flex items-center gap-3 h-[43px] px-[14px] rounded-sm border border-[#e3b341] text-[#ffb50d]">
                <LifeRingIcon />
                Hint
            </button>
        </div>
    </div>
);

const App = () => {
    return (
        <div className="flex flex-col min-h-screen bg-[#141d2b] font-['Inter','Liberation_Sans',sans-serif]">
            {/* ======= BROWSER ======= */}
            <header className="bg-[#2b2a33] border-b border-[#0c0c0d] text-[#fbfbfe] font-['Open_Sans','Noto_Sans',sans-serif]">
                <TabBar />
                <NavBar />
                <nav className="flex items-center gap-[15px] h-[35px] pl-[14px] text-sm">
                    {bookmarks.map((item) => (
                        <a key={item.label} href="#" className="flex items-center gap-[6px]">
                            {item.icon}
                            {item.label}
                        </a>
                    ))}
                </nav>
            </header>

            {/* ======= MAINTENANCE BANNER ======= */}
            <div className="flex items-center gap-[14px] h-[82px] pt-1 pl-[82px] bg-[#2f2c23]">
                <svg viewBox="0 0 36 36" className="w-9 h-9 shrink-0">
                    <circle cx="18" cy="18" r="18" fill="#ffaf00" />
                    <path d="M16.200 9h3.600l-.5 12.500h-2.600z" fill="#2f2c23" />
                    <circle cx="18" cy="25.500" r="2.200" fill="#2f2c23" />
                </svg>
                <div className="leading-6">
                    <p className="text-[17px] font-semibold text-[#ffaf00]">The EU 1 and US 1 Exam VPN servers will be unavailable on May 20th for maintenance.</p>
                    <p className="text-[15px] font-medium text-white">Please use the EU 2 and US 2 VPN servers during this time. Thank you for your patience!</p>
                </div>
            </div>

            {/* ======= QUESTIONS ======= */}
            <main className="relative flex-1 grid grid-cols-[236px_minmax(0,1fr)_680px] items-start pb-[35px]">
                <section className="col-start-2 pt-3 pb-[50px] pl-[23px] pr-[21px] rounded-b-sm bg-[#1b2431]">
                    <div className="flex items-center gap-[11px] h-[37px] text-[13px] text-[#a4b1cd]">
                        <NetworkIcon />
                        <p>
                            RDP to with user "<span className="text-[#9fef00]">htb-student</span>" and password "<span className="text-[#ff3e3e]">Academy_WinFun!</span>"
                        </p>
                    </div>
                    {questions.map((question, i) => (
                        <Fragment key={question.id}>
                            {i > 0 && <hr className="mt-11 mb-5 border-[#121a26]" />}
                            <QuestionBlock question={question} />
                        </Fragment>
                    ))}
                </section>

                <button aria-label="Notes" className="absolute top-[331px] right-[2px] flex items-center justify-center w-[34px] h-[57px] rounded-l-sm bg-[#9fef00]">
                    <FaPen className="w-3 h-3 text-[#141d2b] -scale-x-100" />
                </button>
                <button aria-label="Open help" className="absolute bottom-[23px] right-[23px] flex items-center justify-center w-[54px] h-[54px] rounded-full bg-[#86c900]">
                    <Box className="w-7 h-7 text-white" strokeWidth={2} />
                </button>
                <div className="absolute bottom-[25px] right-1 w-[2px] h-[43px] bg-[#8b8f96]" />
            </main>

            {/* ======= TASKBAR ======= */}
            <footer className="grid grid-cols-[1fr_auto_1fr] items-center h-[60px] bg-[#1c1c1c] border-t border-[#3f3f3f] text-white font-['Open_Sans','Noto_Sans',sans-serif]">
                <div className="col-start-2 flex gap-[5px]">
                    {taskbarApps.map((app) => (
                        <button
                            key={app.name}
                            aria-label={app.name}
                            className={`relative flex items-center justify-center w-[50px] h-[50px] rounded-sm ${app.active ? 'bg-[#2b2b2b] border border-[#333333]' : ''}`}
                        >
                            {app.icon}
                            {app.active && <span className="absolute bottom-0 w-5 h-1 rounded-full bg-[#a9bfae]" />}
                            {app.running && <span className="absolute bottom-0 w-2 h-1 rounded-full bg-[#9a9a9a]" />}
                        </button>
                    ))}
                </div>
                <div className="flex items-center justify-end pb-1 pr-6">
                    <ChevronUp className="w-5 h-5 mr-5" strokeWidth={2} />
                    <svg viewBox="0 0 20 20" className="w-5 h-5 mr-[10px]" fill="none" stroke="#fff" strokeWidth="1.500" strokeLinecap="round">
                        <path d="M1 8a12.500 12.500 0 0 1 18 0M3.800 11a8.700 8.700 0 0 1 12.400 0M6.500 13.700a5 5 0 0 1 7 0" />
                        <circle cx="10" cy="16.300" r="1.500" fill="#fff" stroke="none" />
                    </svg>
                    <svg viewBox="0 0 20 20" className="w-5 h-5 mr-[10px]" fill="none" stroke="#fff" strokeWidth="1.300" strokeLinecap="round" strokeLinejoin="round">
                        <path d="M1 7.500h3l4.500-4v13l-4.500-4H1zM11 7.500c1 1.500 1 3.500 0 5M13.500 5.500c2 2.500 2 6.500 0 9M16 3.500c3.500 3.500 3.500 9.500 0 13" />
                    </svg>
                    <svg viewBox="0 0 20 20" className="w-5 h-5 mr-5">
                        <path d="M7 4.500h8.500a2 2 0 0 1 2 2v7.500a2 2 0 0 1-2 2h-12a2 2 0 0 1-2-2V12" fill="none" stroke="#fff" strokeWidth="1.400" />
                        <path d="M8 6.500h7.500L14 14H3.500zM18.500 8H20v4h-1.500zM4.500.5L0 6.500h2.500L1.500 11 6 5H3.500z" fill="#fff" />
                    </svg>
                    <div className="text-right text-[15px] leading-5">
                        <p>22:08</p>
                        <p>19/5/2025</p>
                    </div>
                </div>
            </footer>
        </div>
    );
};

export default App;
